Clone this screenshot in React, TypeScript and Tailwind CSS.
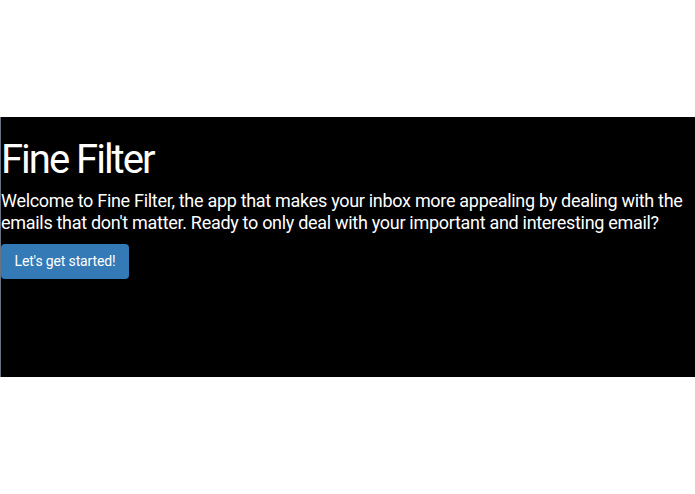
import React from "react";

const App: React.FC = () => {
    return (
        <div className="min-h-screen bg-white flex items-center" style={{ fontFamily: "Roboto, 'Liberation Sans', sans-serif" }}>
            {/* Bandeau noir */}
            <div className="w-full h-[260px] bg-black border-l border-gray-500 text-white">
                <h1 className="text-[40px] leading-[44px] mt-[21px] tracking-[-0.05em]">Fine Filter</h1>
                <p className="text-[18px] leading-[22px] mt-[8px] tracking-[-0.3px]">
                    Welcome to Fine Filter, the app that makes your inbox more appealing by dealing with the emails that don't matter. Ready to only deal with your important and interesting email?
                </p>
                <button className="mt-[10px] w-[128px] h-[35px] bg-[#337ab7] text-white text-[14px] rounded tracking-[-0.01em]">
                    Let's get started!
                </button>
            </div>
        </div>
    );
};

export default App;
